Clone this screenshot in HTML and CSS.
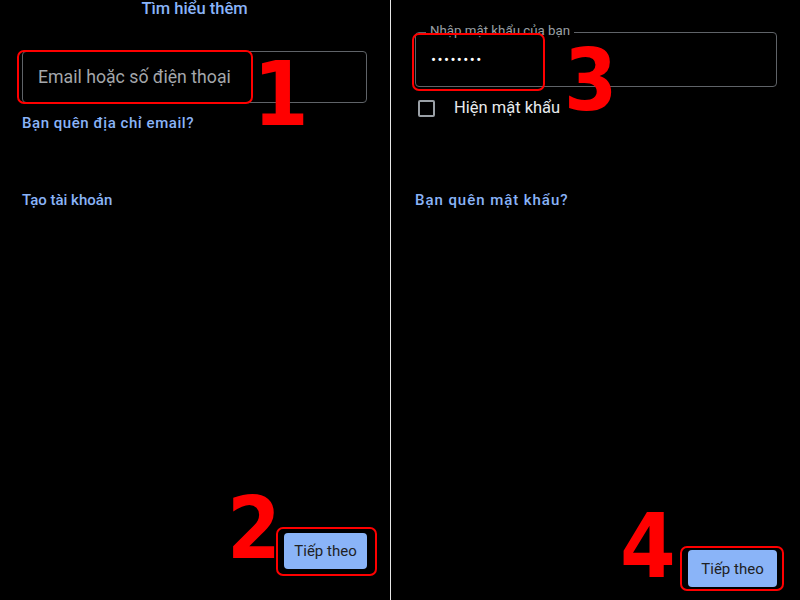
FILE: index.html
```html
<!DOCTYPE html>
<html lang="vi">
<head>
    <meta charset="UTF-8">
    <meta name="viewport" content="width=device-width, initial-scale=1.0">
    <title>Đăng nhập</title>
    <link rel="stylesheet" href="styles.css">
</head>
<body>
    <div class="screens">
        <!-- Step 1: email -->
        <section class="screen screen-email">
            <a class="link link-title">Tìm hiểu thêm</a>
            <div class="field field-email">
                <span class="placeholder">Email hoặc số điện thoại</span>
                <span class="mark mark-email"></span>
            </div>
            <a class="link link-forgot">Bạn quên địa chỉ email?</a>
            <a class="link link-create">Tạo tài khoản</a>
            <div class="actions">
                <button class="btn-next btn-email">Tiếp theo<span class="mark mark-btn-email"></span></button>
            </div>
            <span class="step step-1">1</span>
            <span class="step step-2">2</span>
        </section>

        <div class="divider"></div>

        <!-- Step 2: password -->
        <section class="screen screen-password">
            <div class="field field-password">
                <span class="field-label">Nhập mật khẩu của bạn</span>
                <span class="dots">••••••••</span>
                <span class="mark mark-password"></span>
            </div>
            <label class="show-pass">
                <span class="checkbox"></span>
                <span class="show-pass-text">Hiện mật khẩu</span>
            </label>
            <a class="link link-forgot-pass">Bạn quên mật khẩu?</a>
            <div class="actions">
                <button class="btn-next btn-password">Tiếp theo<span class="mark mark-btn-password"></span></button>
            </div>
            <span class="step step-3">3</span>
            <span class="step step-4">4</span>
        </section>
    </div>
</body>
</html>
```

FILE: styles.css
```css
body {
    margin: 0;
    padding: 0;
    background-color: #000;
    font-family: Roboto, "Noto Sans", sans-serif;
    color: #e8eaed;
    overflow: hidden;
}

.screens {
    display: flex;
    width: 800px;
    height: 600px;
}

.screen {
    position: relative;
    display: flex;
    flex-direction: column;
    height: 600px;
    box-sizing: border-box;
}

.screen-email {
    width: 390px;
    padding: 0 23px 0 22px;
}

.screen-password {
    flex: 1;
    padding: 0 23px 0 24px;
}

.divider {
    width: 1px;
    background-color: #e6e6e6;
}

.link {
    display: block;
    color: #8ab4f8;
    font-size: 15px;
    font-weight: 500;
    line-height: 20px;
}

.link-title {
    font-size: 16.5px;
    line-height: 18px;
    text-align: center;
}

.field {
    position: relative;
    display: flex;
    align-items: center;
    box-sizing: border-box;
    border: 1px solid #5f6368;
    border-radius: 4px;
}

.field-email {
    margin-top: 33px;
    height: 52px;
    padding-left: 15px;
}

.placeholder {
    font-size: 17.7px;
    color: #a4a7ab;
}

.link-forgot {
    margin-top: 10px;
    letter-spacing: 0.55px;
}

.link-create {
    margin-top: 57px;
}

.actions {
    margin-top: auto;
    display: flex;
    justify-content: flex-end;
}

.btn-next {
    position: relative;
    border: none;
    border-radius: 4px;
    background-color: #8ab4f8;
    color: #202124;
    font-family: Roboto, sans-serif;
    font-size: 15px;
    padding: 0;
}

.btn-email {
    width: 83px;
    height: 36px;
    margin-bottom: 31px;
}

.btn-password {
    width: 89px;
    height: 37px;
    margin-bottom: 13px;
}

.field-password {
    margin-top: 32px;
    height: 55px;
    padding-left: 15px;
}

.field-label {
    position: absolute;
    left: 10px;
    top: -10px;
    padding: 0 4px;
    background-color: #000;
    font-size: 13.3px;
    line-height: 16px;
    color: #9aa0a6;
}

.dots {
    font-size: 15px;
    letter-spacing: 1.4px;
    color: #fff;
}

.show-pass {
    display: flex;
    align-items: center;
    gap: 19px;
    margin-top: 12px;
    margin-left: 3px;
    font-size: 16.5px;
    color: #e8eaed;
}

.show-pass-text {
    position: relative;
    top: -1px;
}

.checkbox {
    width: 17px;
    height: 17px;
    box-sizing: border-box;
    border: 2px solid #9aa0a6;
    border-radius: 2px;
}

.link-forgot-pass {
    margin-top: 72px;
    letter-spacing: 0.95px;
}

/* red annotations */
.mark {
    position: absolute;
    box-sizing: border-box;
    border: 2px solid #ff0000;
    border-radius: 7px;
}

.mark-email {
    left: -6px;
    top: -2px;
    width: 236px;
    height: 54px;
}

.mark-btn-email {
    left: -8px;
    top: -6px;
    width: 101px;
    height: 49px;
}

.mark-password {
    left: -4px;
    top: 0;
    width: 133px;
    height: 58px;
}

.mark-btn-password {
    left: -8px;
    top: -4px;
    width: 104px;
    height: 45px;
}

.step {
    position: absolute;
    font-family: "DejaVu Sans Condensed", "DejaVu Sans", sans-serif;
    font-stretch: condensed;
    font-weight: bold;
    line-height: 1;
    color: #ff0000;
}

.step-1 {
    left: 253px;
    top: 50px;
    font-size: 89px;
}

.step-2 {
    left: 227px;
    top: 485px;
    font-size: 86px;
}

.step-3 {
    left: 173px;
    top: 38px;
    font-size: 85px;
}

.step-4 {
    left: 229px;
    top: 502px;
    font-size: 89px;
}
```
